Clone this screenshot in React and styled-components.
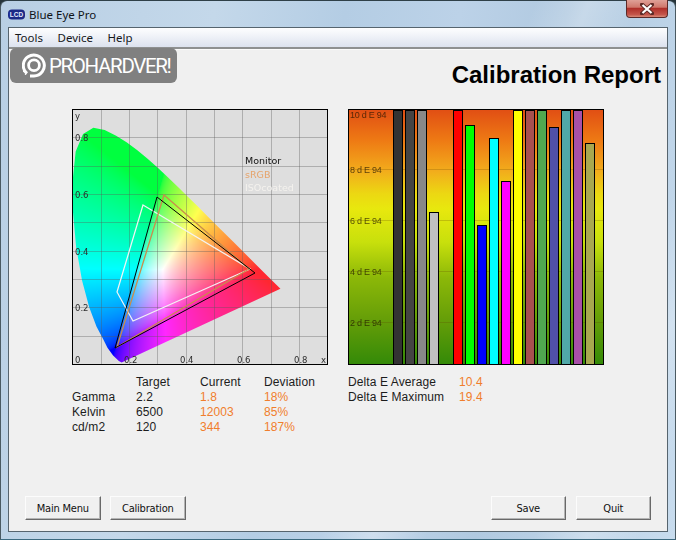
import React, { useEffect, useRef } from 'react'
import styled, { createGlobalStyle } from 'styled-components'

const GlobalCSS = createGlobalStyle`
  * {
    box-sizing: border-box;
  }
  html, body {
    margin: 0;
    padding: 0;
    background: #26343a;
  }
`

const Window = styled.div`
  width: 676px;
  height: 540px;
  display: flex;
  flex-direction: column;
  padding: 0 7px 7px;
  border-radius: 7px 7px 0 0;
  border: 1px solid #4a5a62;
  border-top-color: #2f4048;
  border-bottom: 1px solid #3c6a80;
  background:
    linear-gradient(112deg, rgba(255,255,255,0) 60%, rgba(255,255,255,.28) 66%, rgba(255,255,255,0) 72%, rgba(255,255,255,0) 84%, rgba(255,255,255,.25) 90%, rgba(255,255,255,0) 96%),
    linear-gradient(100deg, #b8cfe4 0%, #c4d8ea 28%, #b4cde4 45%, #bcd2e8 60%, #b0c9e0 74%, #c8dcee 100%);
`

const TitleBar = styled.div`
  height: 26px;
  flex: none;
  display: flex;
  align-items: center;
  gap: 4px;
`

const TitleText = styled.span`
  font: 11.5px "Noto Sans", "Open Sans", sans-serif;
  color: #101418;
`

const CloseButton = styled.div`
  align-self: flex-start;
  margin-left: auto;
  width: 42px;
  height: 18px;
  margin-top: -1px;
  display: flex;
  align-items: center;
  justify-content: center;
  border: 1px solid #5c2a28;
  border-top: 0;
  border-radius: 0 0 4px 4px;
  background: linear-gradient(#dfa097 0%, #d0786c 42%, #b0302a 50%, #c4554a 85%, #d88a78 100%);
`

const Client = styled.div`
  position: relative;
  flex: 1;
  display: flex;
  flex-direction: column;
  border: 1px solid #56646e;
  background: #f0f0f0;
`

const MenuBar = styled.div`
  height: 19px;
  flex: none;
  display: flex;
  align-items: center;
  gap: 14.5px;
  padding-left: 6px;
  background: linear-gradient(#fdfdfe 0%, #f4f6fa 30%, #dce2ee 100%);
`

const MenuItem = styled.span`
  font: 11.5px "Noto Sans", "Open Sans", sans-serif;
  color: #16181c;
`

const MenuRule = styled.div`
  height: 3px;
  flex: none;
  border-top: 2px solid #8e9090;
  border-bottom: 1px solid #fafafa;
`

const LogoBadge = styled.div`
  position: absolute;
  top: 20px;
  left: 1px;
  width: 167px;
  height: 35px;
  display: flex;
  align-items: center;
  gap: 3px;
  padding-left: 12px;
  border-radius: 6px;
  background: #808080;
`

const LogoText = styled.span`
  font: 400 20.5px Roboto, "Liberation Sans", sans-serif;
  letter-spacing: -1.35px;
  color: #fff;
`

const Header = styled.div`
  height: 59px;
  flex: none;
  display: flex;
  justify-content: flex-end;
  align-items: center;
  padding: 0 6px 10px 0;
`

const ReportTitle = styled.h1`
  margin: 0;
  font: bold 24px "Liberation Sans", Arial, sans-serif;
  color: #000;
`

const ChartRow = styled.div`
  display: flex;
  gap: 20px;
  padding-left: 63px;
`

const ChartFrame = styled.div`
  position: relative;
  width: 256px;
  height: 256px;
  flex: none;
  border: 1px solid #000;
  overflow: hidden;
  background: #dedede;
`

const GamutCanvas = styled.canvas`
  display: block;
  width: 254px;
  height: 254px;
`

const ChartOverlay = styled.svg`
  position: absolute;
  top: 0;
  left: 0;
`

const AxisLabel = styled.text`
  font: 8.5px "DejaVu Sans", sans-serif;
  fill: #2c2c2c;
`

const LegendLabel = styled.text`
  font: 9.5px "DejaVu Sans", sans-serif;
  fill: ${({ $color }) => $color};
`

const BarFrame = styled(ChartFrame)`
  display: flex;
  align-items: flex-end;
  gap: 2px;
  padding-left: 44px;
  background: linear-gradient(#e14f14 0%, #ee7a14 12%, #f2ac1c 24%, #ecd812 33%, #e8e80e 39%, #c8e00c 52%, #8cb808 66%, #629c08 84%, #348a08 100%);
`

const Bar = styled.div`
  position: relative;
  width: 10px;
  flex: none;
  height: ${({ $height }) => $height}px;
  background: ${({ $color }) => $color};
  border: 1px solid ${({ $height }) => ($height ? '#000' : 'transparent')};
  border-bottom: 0;
`

const Tick = styled.div`
  position: absolute;
  left: 0;
  right: 0;
  top: ${({ $top }) => $top}px;
  height: 0;
  border-top: 1px solid ${({ $line }) => ($line ? 'rgba(90,60,0,.22)' : 'transparent')};
  display: flex;
  align-items: center;
  padding-left: 1px;
`

const TickLabel = styled.span`
  font: 9px "Liberation Sans", sans-serif;
  letter-spacing: -0.25px;
  color: rgba(30,20,0,.72);
  white-space: nowrap;
`

const StatsRow = styled.div`
  display: flex;
  gap: 20px;
  padding: 10px 0 0 63px;
`

const StatsGrid = styled.div`
  width: 256px;
  display: grid;
  grid-template-columns: repeat(4, 64px);
  grid-auto-rows: 15px;
`

const DeltaGrid = styled.div`
  display: grid;
  grid-template-columns: 111px 60px;
  grid-auto-rows: 15px;
`

const Cell = styled.div`
  font: 12px/15px "Liberation Sans", Arial, sans-serif;
  letter-spacing: 0.1px;
  color: ${({ $accent }) => ($accent ? '#f07e2c' : '#1c1c1c')};
  white-space: nowrap;
`

const Footer = styled.div`
  margin-top: auto;
  display: flex;
  justify-content: space-between;
  padding: 0 16px 11px;
`

const ButtonGroup = styled.div`
  display: flex;
  gap: 9.5px;
`

const Button = styled.button`
  width: 75.5px;
  height: 24px;
  padding: 0;
  font: 11px "DejaVu Sans Condensed", "Liberation Sans", sans-serif;
  letter-spacing: -0.2px;
  color: #111;
  background: #f0f0f0;
  border: 1px solid;
  border-color: #fcfcfc #696969 #696969 #fcfcfc;
  box-shadow: inset -1px -1px 0 #b4b4b4;
`

// CIE 1931 spectral locus, nudged a little left around cyan like the report
const LOCUS = [
  [.1741, .005], [.1644, .0109], [.144, .0297], [.1241, .0578], [.1096, .0868], [.0853, .1327],
  [.0597, .2007], [.0344, .295], [.0135, .4127], [.0022, .5384], [.0019, .6548], [.0119, .7502],
  [.0379, .812], [.0743, .8338], [.1142, .8262], [.1547, .8059], [.1929, .7816], [.2296, .7543],
  [.2658, .7243], [.3016, .6923], [.3373, .6589], [.3731, .6245], [.4087, .5896], [.4441, .5547],
  [.4788, .5202], [.5125, .4866], [.5752, .4242], [.627, .3725], [.6915, .3083], [.7347, .2653],
]

const SCALE = 283.3
const toPx = (x) => x * SCALE - 0.7
const toPy = (y) => 254 - y * SCALE

const gamma = (v) => {
  const c = Math.max(0, Math.min(1, v))
  return 255 * (c <= 0.0031308 ? 12.92 * c : 1.055 * Math.pow(c, 1 / 2.4) - 0.055)
}

const GamutFill = () => {
  const ref = useRef(null)

  useEffect(() => {
    const ctx = ref.current.getContext('2d')
    const shade = document.createElement('canvas')
    shade.width = 254
    shade.height = 254
    const shadeCtx = shade.getContext('2d')
    const img = shadeCtx.createImageData(254, 254)
    for (let py = 0; py < 254; py++) {
      for (let px = 0; px < 254; px++) {
        const x = (px + 0.7) / SCALE
        const y = Math.max(0.002, (254 - py) / SCALE)
        const X = x / y
        const Z = (1 - x - y) / y
        const r = Math.max(0, 3.2406 * X - 1.5372 - 0.4986 * Z)
        const g = Math.max(0, -0.9689 * X + 1.8758 + 0.0415 * Z) + 0.02 * r
        // small blue lift, the greens and reds in the report are not pure
        const b = Math.max(0, 0.0557 * X - 0.204 + 1.057 * Z) + 0.05 * g + 0.03 * r
        const top = Math.max(r, g, b)
        const i = (py * 254 + px) * 4
        img.data[i] = gamma(r / top)
        img.data[i + 1] = gamma(g / top)
        img.data[i + 2] = gamma(b / top)
        img.data[i + 3] = 255
      }
    }
    shadeCtx.putImageData(img, 0, 0)

    ctx.beginPath()
    LOCUS.forEach(([x, y], i) => {
      if (i === 0) ctx.moveTo(toPx(x), toPy(y))
      else ctx.lineTo(toPx(x), toPy(y))
    })
    ctx.closePath()
    ctx.clip()
    ctx.drawImage(shade, 0, 0)
  }, [])

  return <GamutCanvas ref={ref} width={254} height={254} />
}

const GRID = [0.1, 0.2, 0.3, 0.4, 0.5, 0.6, 0.7, 0.8]

const GamutOverlay = () => (
  <ChartOverlay width="254" height="254" viewBox="0 0 254 254">
    {GRID.map((v) => (
      <g key={v} stroke="#5a5a5a" strokeOpacity=".36">
        <line x1={Math.round(toPx(v)) + 0.5} y1="0" x2={Math.round(toPx(v)) + 0.5} y2="254" />
        <line x1="0" y1={Math.round(toPy(v)) + 0.5} x2="254" y2={Math.round(toPy(v)) + 0.5} />
      </g>
    ))}
    <polygon points="70,95 177,159 60,211 44,182" fill="none" stroke="#f4f4f4" strokeWidth="1.2" />
    <polygon points="91,85 176,159 44,237" fill="none" stroke="#c98d4c" strokeWidth="1.3" />
    <polygon points="84,87 182,163 42,238" fill="none" stroke="#000" strokeWidth="1" />
    <AxisLabel x="2" y="9">y</AxisLabel>
    <AxisLabel x="2" y="31">0.8</AxisLabel>
    <AxisLabel x="2" y="88">0.6</AxisLabel>
    <AxisLabel x="2" y="145">0.4</AxisLabel>
    <AxisLabel x="2" y="201">0.2</AxisLabel>
    <AxisLabel x="2" y="253">0</AxisLabel>
    <AxisLabel x="51" y="253">0.2</AxisLabel>
    <AxisLabel x="107" y="253">0.4</AxisLabel>
    <AxisLabel x="164" y="253">0.6</AxisLabel>
    <AxisLabel x="221" y="253">0.8</AxisLabel>
    <AxisLabel x="248" y="253">x</AxisLabel>
    <LegendLabel x="172" y="54" $color="#111">Monitor</LegendLabel>
    <LegendLabel x="172" y="68" $color="#e6a36a">sRGB</LegendLabel>
    <LegendLabel x="172" y="81" $color="#f4f2ee">ISOcoated</LegendLabel>
  </ChartOverlay>
)

const BARS = [
  { color: '#333333', height: 254 },
  { color: '#444444', height: 254 },
  { color: '#888888', height: 254 },
  { color: '#c0c0c0', height: 152 },
  { color: 'transparent', height: 0 },
  { color: '#ff0000', height: 254 },
  { color: '#00ff00', height: 239 },
  { color: '#0000ff', height: 139 },
  { color: '#00ffff', height: 226 },
  { color: '#ff00ff', height: 183 },
  { color: '#ffff00', height: 254 },
  { color: '#a85050', height: 254 },
  { color: '#50a850', height: 254 },
  { color: '#5050a8', height: 237 },
  { color: '#50a8a8', height: 254 },
  { color: '#a850a8', height: 254 },
  { color: '#a8a850', height: 221 },
]

const TICKS = [
  { label: '10 d E 94', top: 4, line: false },
  { label: '8 d E 94', top: 59, line: true },
  { label: '6 d E 94', top: 110, line: true },
  { label: '4 d E 94', top: 161, line: true },
  { label: '2 d E 94', top: 212, line: true },
]

const STATS = [
  ['Gamma', '2.2', '1.8', '18%'],
  ['Kelvin', '6500', '12003', '85%'],
  ['cd/m2', '120', '344', '187%'],
]

const AppIcon = () => (
  <svg width="17" height="11" viewBox="0 0 17 11">
    <rect x="0" y="0.5" width="17" height="10" rx="4" fill="#1c2a86" />
    <text x="8.5" y="7.8" textAnchor="middle" fontSize="6.5" fontWeight="700" fontFamily="Liberation Sans, sans-serif" fill="#e4e9ff">LCD</text>
  </svg>
)

const CloseGlyph = () => (
  <svg width="14" height="12" viewBox="0 0 14 12">
    <path d="M2 1.5 L12 10.5 M12 1.5 L2 10.5" stroke="#5e2a26" strokeWidth="4" strokeLinecap="square" />
    <path d="M2.5 2 L11.5 10 M11.5 2 L2.5 10" stroke="#fff" strokeWidth="2.2" />
  </svg>
)

const LogoMark = () => (
  <svg width="24" height="25" viewBox="0 0 24 25" fill="none" stroke="#fff">
    <path d="M5 20.5 A10.5 10.5 0 1 1 12 23 L8 23" strokeWidth="3" />
    <circle cx="12" cy="12.2" r="5.4" strokeWidth="2.8" />
    <path d="M1.6 14 L1.6 20 M3.4 19 L3.4 23" strokeWidth="1" strokeDasharray="1 1" />
  </svg>
)

export default function App() {
  return (
    <>
      <GlobalCSS />
      <Window>
        <TitleBar>
          <AppIcon />
          <TitleText>Blue Eye Pro</TitleText>
          <CloseButton><CloseGlyph /></CloseButton>
        </TitleBar>
        <Client>
          <MenuBar>
            <MenuItem>Tools</MenuItem>
            <MenuItem>Device</MenuItem>
            <MenuItem>Help</MenuItem>
          </MenuBar>
          <MenuRule />
          <LogoBadge>
            <LogoMark />
            <LogoText>PROHARDVER!</LogoText>
          </LogoBadge>
          <Header>
            <ReportTitle>Calibration Report</ReportTitle>
          </Header>
          <ChartRow>
            <ChartFrame>
              <GamutFill />
              <GamutOverlay />
            </ChartFrame>
            <BarFrame>
              {TICKS.map((t) => (
                <Tick key={t.label} $top={t.top} $line={t.line}>
                  <TickLabel>{t.label}</TickLabel>
                </Tick>
              ))}
              {BARS.map((b, i) => (
                <Bar key={i} $color={b.color} $height={b.height} />
              ))}
            </BarFrame>
          </ChartRow>
          <StatsRow>
            <StatsGrid>
              <Cell />
              <Cell>Target</Cell>
              <Cell>Current</Cell>
              <Cell>Deviation</Cell>
              {STATS.map(([name, target, current, deviation]) => (
                <React.Fragment key={name}>
                  <Cell>{name}</Cell>
                  <Cell>{target}</Cell>
                  <Cell $accent>{current}</Cell>
                  <Cell $accent>{deviation}</Cell>
                </React.Fragment>
              ))}
            </StatsGrid>
            <DeltaGrid>
              <Cell>Delta E Average</Cell>
              <Cell $accent>10.4</Cell>
              <Cell>Delta E Maximum</Cell>
              <Cell $accent>19.4</Cell>
            </DeltaGrid>
          </StatsRow>
          <Footer>
            <ButtonGroup>
              <Button>Main Menu</Button>
              <Button>Calibration</Button>
            </ButtonGroup>
            <ButtonGroup>
              <Button>Save</Button>
              <Button>Quit</Button>
            </ButtonGroup>
          </Footer>
        </Client>
      </Window>
    </>
  )
}
